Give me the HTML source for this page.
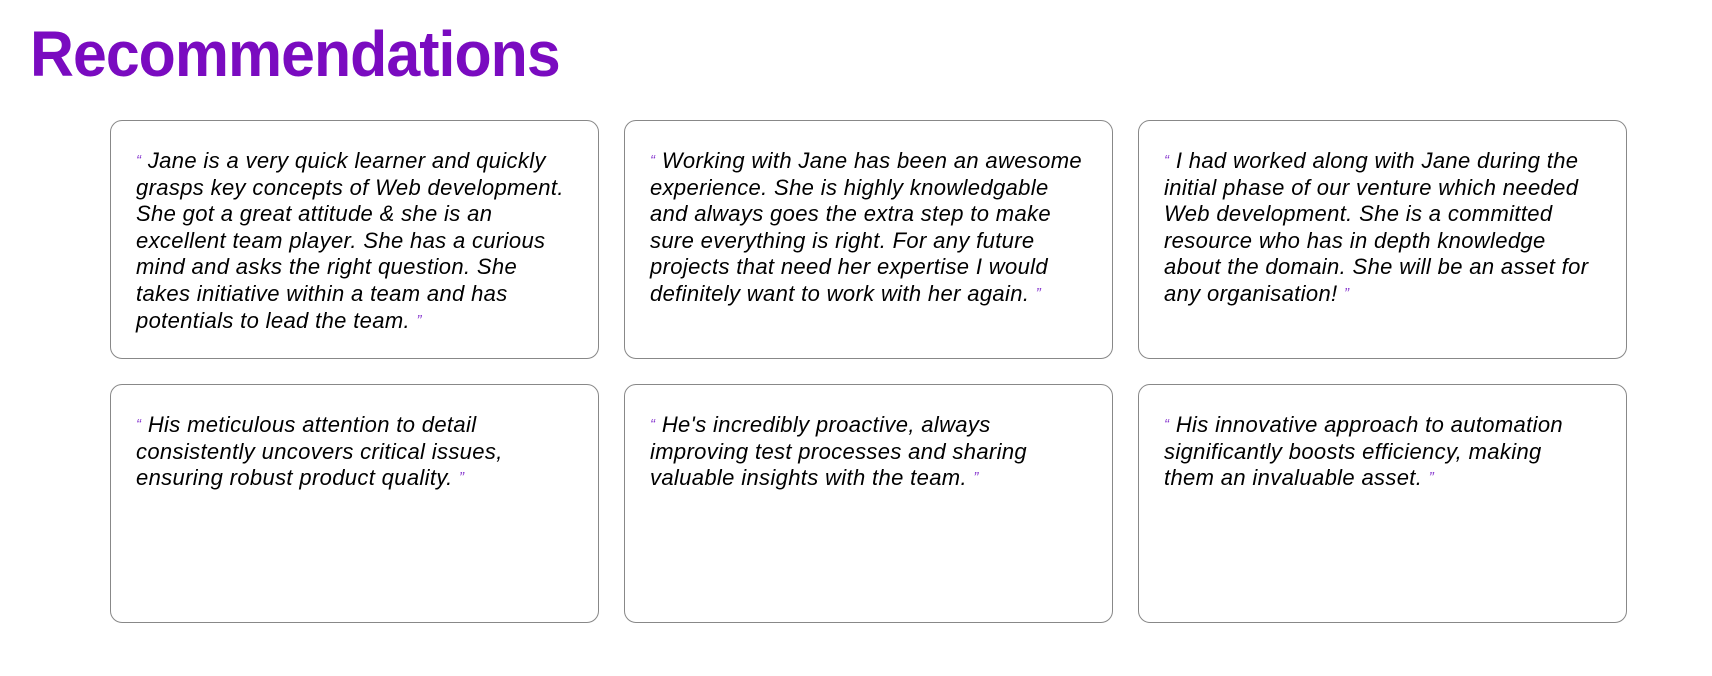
<!DOCTYPE html>
<html><head><meta charset="utf-8"><style>
body{margin:0;background:#fff;width:1712px;height:676px;overflow:hidden;font-family:"Liberation Sans",sans-serif;}
h1{position:absolute;left:30px;top:14px;margin:0;font-size:64px;font-weight:bold;color:#7a0bc0;line-height:80px;white-space:nowrap;transform:scaleX(0.95);transform-origin:left top;letter-spacing:-1px}
.card{position:absolute;width:489px;height:239px;border:1px solid #888;border-radius:12px;box-sizing:border-box;}
.t{position:absolute;left:25px;top:27px;font-style:italic;font-size:22px;letter-spacing:0.35px;line-height:26.6px;color:#000;white-space:nowrap}
.q{color:#8a3cd0;font-size:15px;vertical-align:3px}
</style></head><body>
<h1>Recommendations</h1>
<div class="card" style="left:110px;top:120px"><div class="t"><span class="q">“</span> Jane is a very quick learner and quickly<br>grasps key concepts of Web development.<br>She got a great attitude &amp; she is an<br>excellent team player. She has a curious<br>mind and asks the right question. She<br>takes initiative within a team and has<br>potentials to lead the team. <span class="q">”</span></div></div>
<div class="card" style="left:624px;top:120px"><div class="t"><span class="q">“</span> Working with Jane has been an awesome<br>experience. She is highly knowledgable<br>and always goes the extra step to make<br>sure everything is right. For any future<br>projects that need her expertise I would<br>definitely want to work with her again. <span class="q">”</span></div></div>
<div class="card" style="left:1138px;top:120px"><div class="t"><span class="q">“</span> I had worked along with Jane during the<br>initial phase of our venture which needed<br>Web development. She is a committed<br>resource who has in depth knowledge<br>about the domain. She will be an asset for<br>any organisation! <span class="q">”</span></div></div>
<div class="card" style="left:110px;top:384px"><div class="t"><span class="q">“</span> His meticulous attention to detail<br>consistently uncovers critical issues,<br>ensuring robust product quality. <span class="q">”</span></div></div>
<div class="card" style="left:624px;top:384px"><div class="t"><span class="q">“</span> He's incredibly proactive, always<br>improving test processes and sharing<br>valuable insights with the team. <span class="q">”</span></div></div>
<div class="card" style="left:1138px;top:384px"><div class="t"><span class="q">“</span> His innovative approach to automation<br>significantly boosts efficiency, making<br>them an invaluable asset. <span class="q">”</span></div></div>
</body></html>
